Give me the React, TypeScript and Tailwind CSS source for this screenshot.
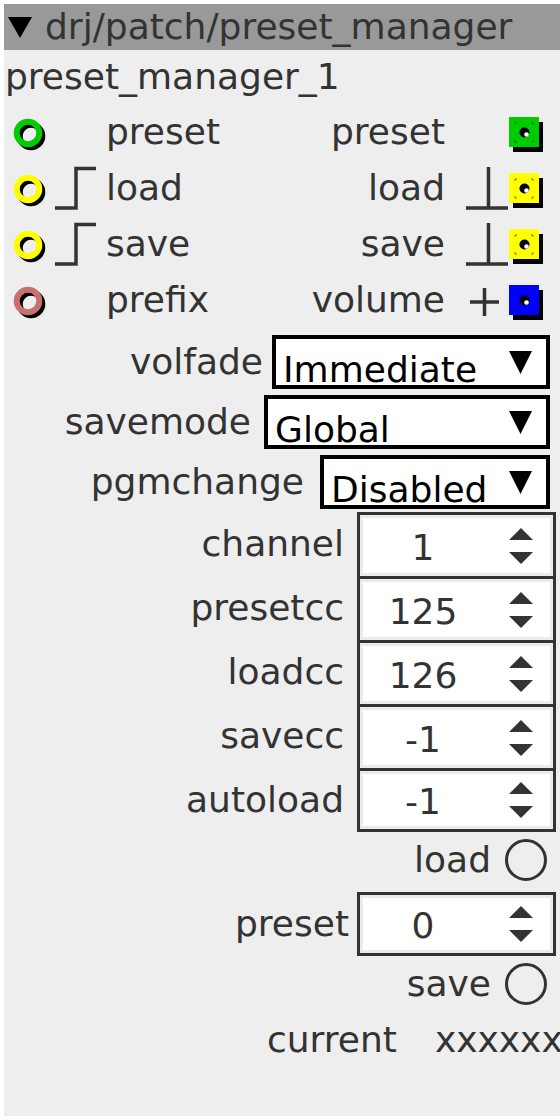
import React from "react";

type IoProps = {
  inColor: string;
  trig?: boolean;
  inLabel: string;
  outLabel: string;
  outIcon?: "bar" | "plus";
  outColor: string;
};

const Inlet = ({ color }: { color: string }) => (
  <svg width="48" height="56" className="shrink-0">
    <circle cx="27" cy="32" r="11.3" fill="none" stroke="#000" strokeWidth="6" />
    <circle cx="24" cy="29" r="11.3" fill="none" stroke={color} strokeWidth="6" />
  </svg>
);

const Outlet = ({ color }: { color: string }) => (
  <svg width="36" height="56" className="shrink-0">
    <rect x="4" y="18" width="30" height="30" fill="#000" />
    <rect x="0" y="13" width="30" height="30" fill={color} />
    <circle cx="15.5" cy="28.5" r="5" fill="#000" />
    <circle cx="17.5" cy="30.5" r="2.3" fill="#fff" />
    <path
      d="M6 21 V19 H8 M22 19 H24 V21 M6 36 V38 H8 M22 38 H24 V36"
      fill="none"
      stroke="#222"
      strokeWidth="1"
      opacity="0.6"
    />
  </svg>
);

// io row: inlet on the left, outlet on the right
const IoRow = ({ inColor, trig, inLabel, outLabel, outIcon, outColor }: IoProps) => (
  <div className="flex h-14 items-center">
    <Inlet color={inColor} />
    <svg width="48" height="56" className="shrink-0">
      {trig && <path d="M3 48 H24 V8.5 H44" fill="none" stroke="#333" strokeWidth="3.5" />}
    </svg>
    <span className="ml-[6px]">{inLabel}</span>
    <span className="ml-auto mr-[16px]">{outLabel}</span>
    <svg width="48" height="56" className="shrink-0">
      {outIcon === "bar" && (
        <path d="M5 48 H47 M27.5 7 V48" fill="none" stroke="#333" strokeWidth="3.5" />
      )}
      {outIcon === "plus" && (
        <path d="M9 30 H38 M23.5 16 V44" fill="none" stroke="#333" strokeWidth="3.5" />
      )}
    </svg>
    <Outlet color={outColor} />
    <div className="w-[15px] shrink-0" />
  </div>
);

const Dropdown = ({ label, value, width, gap }: { label: string; value: string; width: string; gap: string }) => (
  <div className={`flex items-center justify-end mr-[10px] ${gap}`}>
    <span>{label}</span>
    <div className={`flex h-[54px] items-center border-4 border-black bg-white pl-[7px] pr-[14px] text-black ${width}`}>
      <span className="pt-4">{value}</span>
      <svg width="23" height="23" className="ml-auto shrink-0">
        <polygon points="0,0 23,0 11.5,23" fill="#000" />
      </svg>
    </div>
  </div>
);

const NumBox = ({ value, last }: { value: string; last?: boolean }) => (
  <div
    className={`h-16 w-[199px] border-x-[3px] border-t-[3px] border-[#333] ${last ? "border-b-[3px]" : ""}`}
  >
    <div className="flex h-full items-center border-[3px] border-[#ebebeb] bg-white">
      <span className="w-[120px] pt-1 text-center">{value}</span>
      <svg width="24" height="36" className="ml-[26px] shrink-0">
        <polygon points="0,12 12,0 24,12" fill="#333" />
        <polygon points="0,24 24,24 12,36" fill="#333" />
      </svg>
    </div>
  </div>
);

const NumRow = ({ label, value, last, gap = "gap-[13px]" }: { label: string; value: string; last?: boolean; gap?: string }) => (
  <div className={`mr-[4px] flex items-center justify-end ${gap}`}>
    <span>{label}</span>
    <NumBox value={value} last={last} />
  </div>
);

const ButtonRow = ({ label }: { label: string }) => (
  <div className="mr-[12px] flex h-14 items-center justify-end gap-[13px]">
    <span>{label}</span>
    <svg width="44" height="44" className="shrink-0">
      <circle cx="22" cy="22" r="19.5" fill="none" stroke="#333" strokeWidth="3" />
    </svg>
  </div>
);

export default function App() {
  return (
    <div className="min-h-screen bg-white p-1 font-['DejaVu_Sans','Liberation_Sans',sans-serif] text-[36px] leading-none text-[#333]">
      <div className="h-[1112px] w-[556px] overflow-hidden bg-[#eeeeee]">
        {/* title */}
        <div className="flex h-[46px] items-center bg-[#999999]">
          <svg width="41" height="46" className="shrink-0">
            <polygon points="4,13 28,13 16,34" fill="#000" />
          </svg>
          <span className="whitespace-nowrap">drj/patch/preset_manager</span>
        </div>
        <div className="flex h-[54px] items-center pl-px">preset_manager_1</div>

        <IoRow inColor="#00cc00" inLabel="preset" outLabel="preset" outColor="#00cc00" />
        <IoRow inColor="#ffff00" trig inLabel="load" outLabel="load" outIcon="bar" outColor="#ffff00" />
        <IoRow inColor="#ffff00" trig inLabel="save" outLabel="save" outIcon="bar" outColor="#ffff00" />
        <IoRow inColor="#c87070" inLabel="prefix" outLabel="volume" outIcon="plus" outColor="#0000ff" />

        <div className="mt-[7px] flex flex-col gap-[6px]">
          <Dropdown label="volfade" value="Immediate" width="w-[278px]" gap="gap-[9px]" />
          <Dropdown label="savemode" value="Global" width="w-[286px]" gap="gap-[13px]" />
          <Dropdown label="pgmchange" value="Disabled" width="w-[230px]" gap="gap-[16px]" />
        </div>

        <div className="mt-[3px] flex flex-col">
          <NumRow label="channel" value="1" />
          <NumRow label="presetcc" value="125" />
          <NumRow label="loadcc" value="126" />
          <NumRow label="savecc" value="-1" />
          <NumRow label="autoload" value="-1" last />
        </div>

        <ButtonRow label="load" />
        <div className="mt-[4px]">
          <NumRow label="preset" value="0" last gap="gap-[8px]" />
        </div>
        <ButtonRow label="save" />

        <div className="flex h-14 items-center whitespace-nowrap pl-[263px]">
          <span>current</span>
          <span className="ml-[38px]">xxxxxxxx</span>
        </div>
      </div>
    </div>
  );
}
